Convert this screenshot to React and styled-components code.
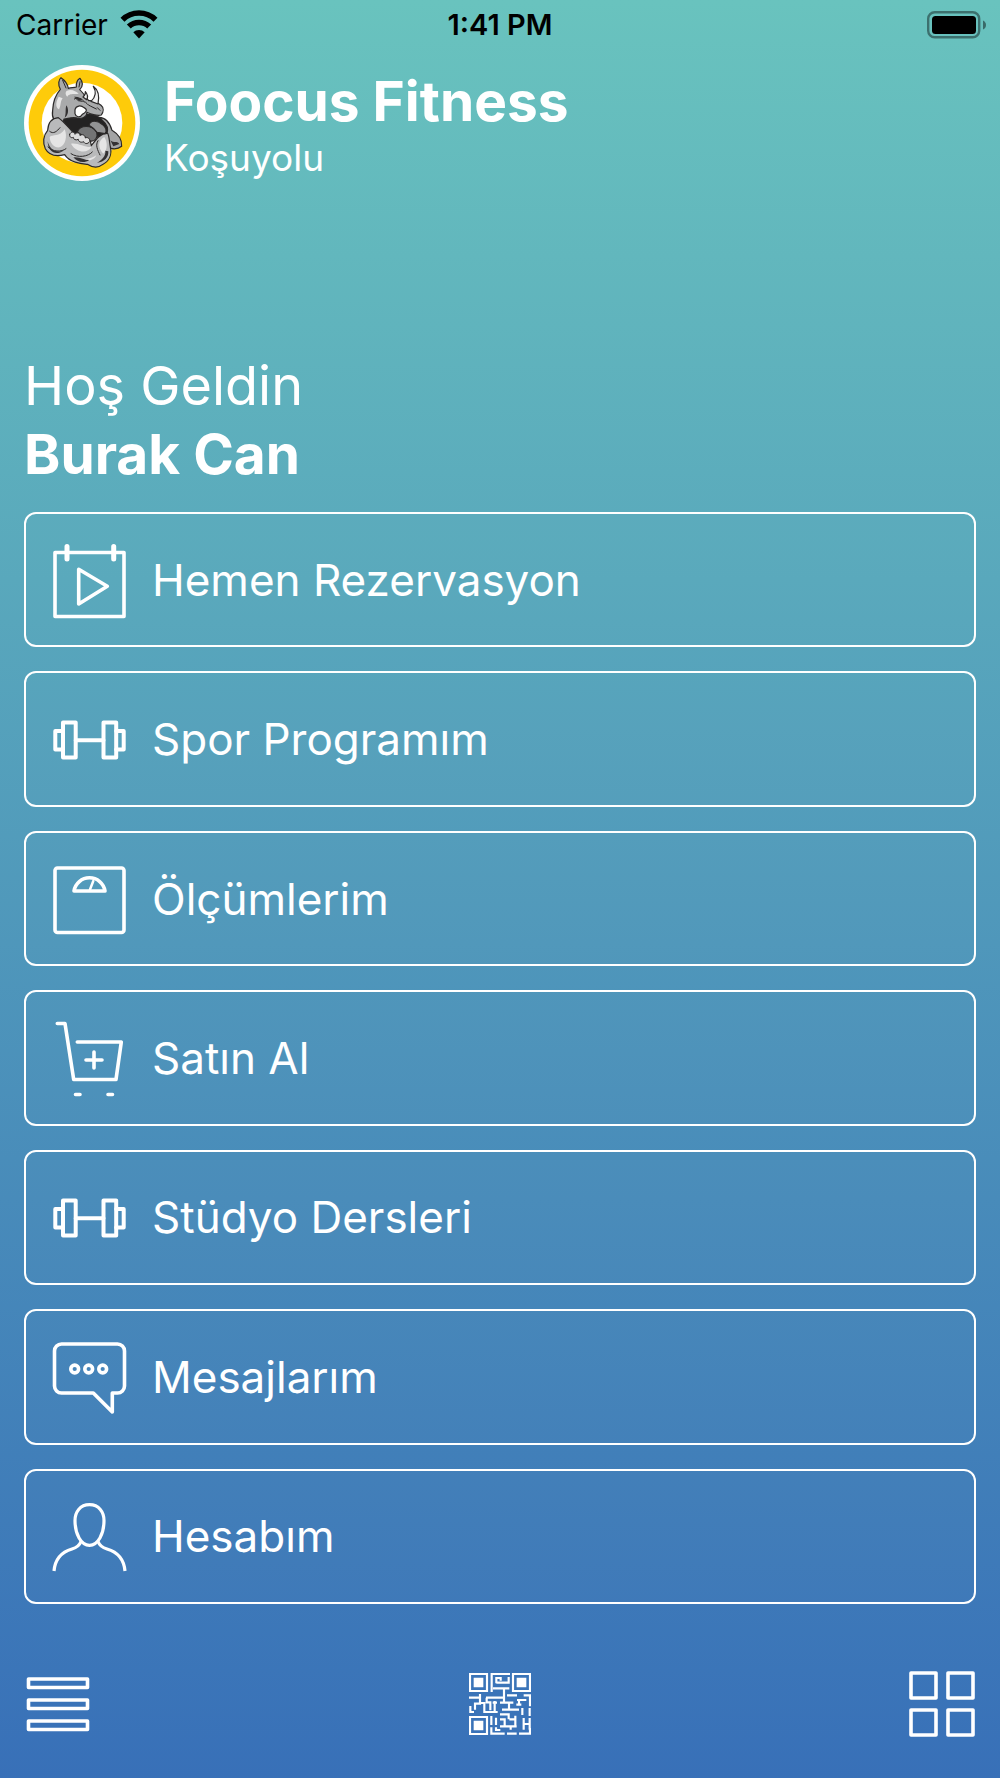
import React from "react";
import styled, { createGlobalStyle } from "styled-components";

const GlobalStyle = createGlobalStyle`
  * { box-sizing: border-box; }
  body { margin: 0; }
  h1, p { margin: 0; }
`;

const Screen = styled.div`
  min-height: 100vh;
  display: flex;
  flex-direction: column;
  background: linear-gradient(180deg, #69c3be 0%, #3870b8 100%);
  color: #fff;
  font-family: Inter, "Noto Sans", sans-serif;
`;

const StatusBar = styled.div`
  display: grid;
  grid-template-columns: 1fr auto 1fr;
  align-items: center;
  height: 50px;
  padding: 0 14px;
  color: #000;
  font-size: 28px;
  line-height: 32px;
`;

const Carrier = styled.div`
  display: flex;
  align-items: center;
  gap: 12px;
  padding-left: 2px;
`;

const Clock = styled.time`
  font-size: 29px;
  font-weight: 600;
`;

const Battery = styled.svg`
  display: block;
  justify-self: end;
`;

const Header = styled.header`
  display: flex;
  align-items: center;
  gap: 24px;
  padding: 15px 24px 0;
`;

const Brand = styled.div`
  display: flex;
  flex-direction: column;
  padding-top: 2px;
`;

const Title = styled.h1`
  font-size: 55px;
  line-height: 68px;
  font-weight: 700;
`;

const Branch = styled.p`
  font-size: 37px;
  line-height: 46px;
`;

const Greeting = styled.section`
  padding: 170px 24px 23px;
  font-size: 55px;
  line-height: 69px;
`;

const Name = styled.p`
  font-weight: 700;
`;

const Welcome = styled.p`
  font-size: 54px;
  font-weight: 400;
`;

const Menu = styled.nav`
  flex: 1;
  display: flex;
  flex-direction: column;
  gap: 24px;
  padding: 0 24px;
`;

const MenuButton = styled.button`
  flex: 1;
  min-height: 120px;
  display: flex;
  align-items: center;
  gap: 24px;
  padding: 0 26px;
  border: 2px solid #fff;
  border-radius: 12px;
  background: rgba(255, 255, 255, 0.01);
  color: inherit;
  font: inherit;
  font-size: 44px;
  line-height: 56px;
  text-align: left;
  cursor: pointer;
`;

const LineIcon = styled.svg`
  flex: none;
  overflow: visible;
  fill: none;
  stroke: #fff;
  stroke-width: ${(p) => p.$weight || 3.6};
  stroke-linejoin: round;
  stroke-linecap: round;
`;

const TabBar = styled.footer`
  display: grid;
  grid-template-columns: 1fr auto 1fr;
  align-items: center;
  height: 174px;
  padding: 26px 24px 0;
`;

const TabButton = styled.button`
  display: flex;
  justify-self: ${(p) => p.$side || "center"};
  padding: 0;
  border: 0;
  background: none;
  cursor: pointer;
`;

const Glyph = ({ children, weight }) => (
  <LineIcon width="76" height="76" viewBox="0 0 76 76" $weight={weight} aria-hidden="true">
    {children}
  </LineIcon>
);

const CalendarIcon = () => (
  <Glyph>
    <rect x="3" y="10.5" width="69" height="64" />
    <path d="M15 4.5V17M61.7 4.5V17" strokeWidth="5" />
    <path d="M26.7 27.3V62L55.3 44.3Z" />
  </Glyph>
);

const DumbbellIcon = () => (
  <Glyph weight={4}>
    <rect x="11" y="21.5" width="12.7" height="35" />
    <rect x="51.5" y="21.5" width="12.7" height="35" />
    <path d="M11 30H3.3V48.5H11M64.2 30H71.7V48.5H64.2M23.7 39.2H51.5" />
  </Glyph>
);

const ScaleIcon = () => (
  <Glyph>
    <rect x="3" y="7" width="69" height="64.5" rx="2.5" />
    <path d="M22 30A15.7 15.7 0 0 1 53 30Z" />
    <path d="M38 28.5L41.3 20" strokeWidth="2.5" />
  </Glyph>
);

const CartIcon = () => (
  <Glyph>
    <path d="M5.3 3.5H13L21.7 59.5H64L69.3 22H25.3" />
    <path d="M42 32V48M34 40H50M23.5 74.5H28M56 74.5H60.5" />
  </Glyph>
);

const MessageIcon = () => (
  <Glyph>
    <path d="M9.5 5H65.5A7 7 0 0 1 72.5 12V47A7 7 0 0 1 65.5 54H60.3V73L41.3 54H9.5A7 7 0 0 1 2.5 47V12A7 7 0 0 1 9.5 5Z" />
    <circle cx="22.7" cy="30" r="3.9" />
    <circle cx="36.7" cy="30" r="3.9" />
    <circle cx="50.7" cy="30" r="3.9" />
  </Glyph>
);

const UserIcon = () => (
  <Glyph weight={3.2}>
    <path d="M37.5 6.7C28 6.7 23 14 23 22.5C23 36 29 47.3 37.5 47.3S52 36 52 22.5C52 14 47 6.7 37.5 6.7Z" />
    <path
      strokeLinecap="butt"
      d="M29 43.5C27.5 47.5 25 49.5 20 51C8 54.5 3 62 2 73M46 43.5C47.5 47.5 50 49.5 55 51C67 54.5 72 62 73 73"
    />
  </Glyph>
);

const WifiIcon = () => (
  <svg width="38" height="30" viewBox="0 0 38 30" aria-hidden="true">
    <g fill="none" stroke="#000" strokeWidth="5.6">
      <path d="M2.5 9.8A23.5 23.5 0 0 1 35.500 9.8" />
      <path d="M8.8 16.6A14.7 14.7 0 0 1 29.2 16.6" />
    </g>
    <path d="M19 28.5L13.3 22.3A8 8 0 0 1 24.7 22.3Z" />
  </svg>
);

const BatteryIcon = () => (
  <Battery width="59" height="28" viewBox="0 0 59 28" role="img" aria-label="Battery full">
    <rect x="1.2" y="1.2" width="51" height="25" rx="6.5" fill="none" stroke="#000" strokeOpacity=".42" strokeWidth="2.4" />
    <rect x="5" y="5" width="44" height="18" rx="3.5" />
    <path d="M56 9.5C58 10.5 59 12 59 14S58 17.5 56 18.5Z" fillOpacity=".45" />
  </Battery>
);

const RhinoLogo = () => (
  <svg width="116" height="116" viewBox="27 30 348 348" role="img" aria-label="Foocus Fitness">
    <circle cx="201" cy="204" r="174" fill="#fff" />
    <circle cx="201" cy="204" r="160" fill="#fecb0a" />
    <circle cx="201" cy="204" r="121" fill="#fff" />
    <g stroke="#2b2929" strokeWidth="3.6" strokeLinejoin="round" strokeLinecap="round">
      <path fill="#a3a4a5" d="M252 187C276 188 286 208 291 226C308 236 321 253 320 274C309 283 294 283 279 278L250 252L240 202Z" />
      <path fill="#232222" d="M142 185L179 190L216 177C238 177 254 184 264 198C276 208 280 222 276 236L234 250L158 232Z" />
      <path fill="#a9aaab" d="M136 103C128 88 131 74 138 68C150 76 158 88 160 100C169 98 178 98 184 96C183 84 188 74 195 70C205 82 203 95 194 104C205 114 213 127 221 137C236 135 248 143 258 151C267 158 266 170 259 180C244 184 228 177 216 172C216 184 204 192 190 190C172 184 158 192 147 192L141 218C119 205 109 187 113 166C114 139 122 119 136 103Z" />
      <path fill="#b9babb" d="M130 188C104 190 99 211 98 226C84 242 83 264 91 281C102 301 125 305 149 299C164 323 198 326 217 328C231 337 249 340 262 329C284 318 291 297 286 276C283 260 283 245 278 235C257 234 244 252 229 272L222 240L176 234C160 218 148 200 130 188Z" />
      <path fill="#737475" d="M187 231C195 209 230 209 245 231C250 248 239 261 226 258Z" />
      <path fill="#929394" d="M222 211C226 195 246 195 263 209C274 219 277 228 270 236L246 232C239 222 231 216 222 211Z" />
      <path fill="#f0f0f0" d="M228 139C242 126 244 109 235 94C250 105 254 123 249 147Z" />
      <path fill="#f0f0f0" d="M204 126C210 121 212 115 211 110C218 118 219 127 215 134Z" />
      <path fill="#fff" d="M180 164C183 151 198 150 207 158C221 164 211 174 202 178C195 190 182 186 180 176Z" />
      <path fill="#dcdcdc" strokeWidth="3" d="M164 238C168 228 178 230 180 238C184 231 195 232 195 242C201 236 211 240 211 249C218 245 226 251 224 260C218 268 208 267 206 260C198 264 190 260 190 253C182 257 175 253 175 247C168 250 163 246 164 238Z" />
      <path fill="none" strokeWidth="3" d="M178 132C187 126 203 130 206 140C215 140 217 151 226 153L244 162M180 128L190 137L202 139M143 76L153 99M195 80L192 96M104 229C115 239 126 229 135 218M99 276C113 291 139 292 153 281M168 296C188 310 220 305 232 291M249 257C240 271 248 285 255 300M247 158L255 166" />
    </g>
    <g fill="#e5e5e5">
      <path d="M156 107C169 101 183 108 191 116C180 119 164 113 157 125C151 119 150 111 156 107Z" />
      <path d="M104 246C113 237 133 248 149 223C158 244 151 272 134 277C118 279 105 266 104 246Z" />
      <path d="M168 266C188 262 213 279 229 276C219 296 183 294 168 266Z" />
      <path d="M268 246C248 258 248 278 265 296C278 285 278 261 268 246Z" />
      <path d="M173 303C193 316 226 315 244 301C237 321 190 327 173 303Z" />
      <path d="M131 125C120 145 123 159 132 163C139 150 135 140 143 130Z" />
    </g>
    <g fill="#333132">
      <path d="M154 151C164 165 158 184 149 188C154 176 150 165 154 151Z" />
      <path d="M98 259C106 290 128 293 145 287C125 302 99 294 98 259Z" />
      <path d="M175 307C193 304 209 315 223 315C209 325 187 323 175 307Z" />
      <path d="M271 287C273 303 260 315 246 323C269 321 281 307 280 289Z" />
      <path d="M286 256C297 266 305 256 313 267L295 274Z" />
      <path d="M178 125C190 124 198 131 203 135L192 137Z" />
    </g>
  </svg>
);

const ListIcon = () => (
  <LineIcon width="68" height="68" viewBox="0 0 68 68" $weight={3.6} aria-hidden="true">
    <rect x="4.5" y="9" width="59" height="8.5" />
    <rect x="4.5" y="30" width="59" height="8.5" />
    <rect x="4.5" y="51" width="59" height="8.5" />
  </LineIcon>
);

const QrIcon = () => (
  <svg width="62" height="62" viewBox="27 27 186 186" aria-hidden="true">
    <g fill="none" stroke="#fff" strokeWidth="6.5">
      <path d="M30 30H81V81H30ZM159 30H210V81H159ZM30 159H81V210H30Z" />
      <path d="M95 84V30H150M109 58V42H122V50M109 56H146V39M99 73H148M132 73V117M78 101H132M27 101H60M60 90V119H45V137M60 117H73V144H113M31 126V144H42M80 101V115H91V139M104 111V144M98 116H111M120 116H160M147 116V134M126 137H177M141 94H171M177 107V122M171 108H199M191 94H210V127M169 122H184M187 132V153M209 132V156M120 151H146V166M120 166H134V187M120 187H170M148 166H166M166 155V190M152 187V197M94 156V183M108 161V183M94 190V209H134M108 190V198H121M141 209H170M177 209H210V192M191 162V197M209 162V197M191 180H210" />
    </g>
    <path fill="#fff" d="M41 41H70V70H41ZM170 41H199V70H170ZM41 170H70V199H41Z" />
  </svg>
);

const GridIcon = () => (
  <LineIcon width="68" height="68" viewBox="0 0 68 68" $weight={3.6} aria-hidden="true">
    <rect x="3" y="3" width="25" height="25" />
    <rect x="40" y="3" width="25" height="25" />
    <rect x="3" y="40" width="25" height="25" />
    <rect x="40" y="40" width="25" height="25" />
  </LineIcon>
);

const items = [
  { label: "Hemen Rezervasyon", Icon: CalendarIcon },
  { label: "Spor Programım", Icon: DumbbellIcon },
  { label: "Ölçümlerim", Icon: ScaleIcon },
  { label: "Satın Al", Icon: CartIcon },
  { label: "Stüdyo Dersleri", Icon: DumbbellIcon },
  { label: "Mesajlarım", Icon: MessageIcon },
  { label: "Hesabım", Icon: UserIcon },
];

export default function App() {
  return (
    <Screen>
      <GlobalStyle />
      <StatusBar>
        <Carrier>
          Carrier
          <WifiIcon />
        </Carrier>
        <Clock>1:41 PM</Clock>
        <BatteryIcon />
      </StatusBar>
      <Header>
        <RhinoLogo />
        <Brand>
          <Title>Foocus Fitness</Title>
          <Branch>Koşuyolu</Branch>
        </Brand>
      </Header>
      <Greeting>
        <Welcome>Hoş Geldin</Welcome>
        <Name>Burak Can</Name>
      </Greeting>
      <Menu>
        {items.map(({ label, Icon }) => (
          <MenuButton key={label} type="button">
            <Icon />
            {label}
          </MenuButton>
        ))}
      </Menu>
      <TabBar>
        <TabButton type="button" $side="start" aria-label="Menü">
          <ListIcon />
        </TabButton>
        <TabButton type="button" aria-label="QR kod">
          <QrIcon />
        </TabButton>
        <TabButton type="button" $side="end" aria-label="Kategoriler">
          <GridIcon />
        </TabButton>
      </TabBar>
    </Screen>
  );
}
